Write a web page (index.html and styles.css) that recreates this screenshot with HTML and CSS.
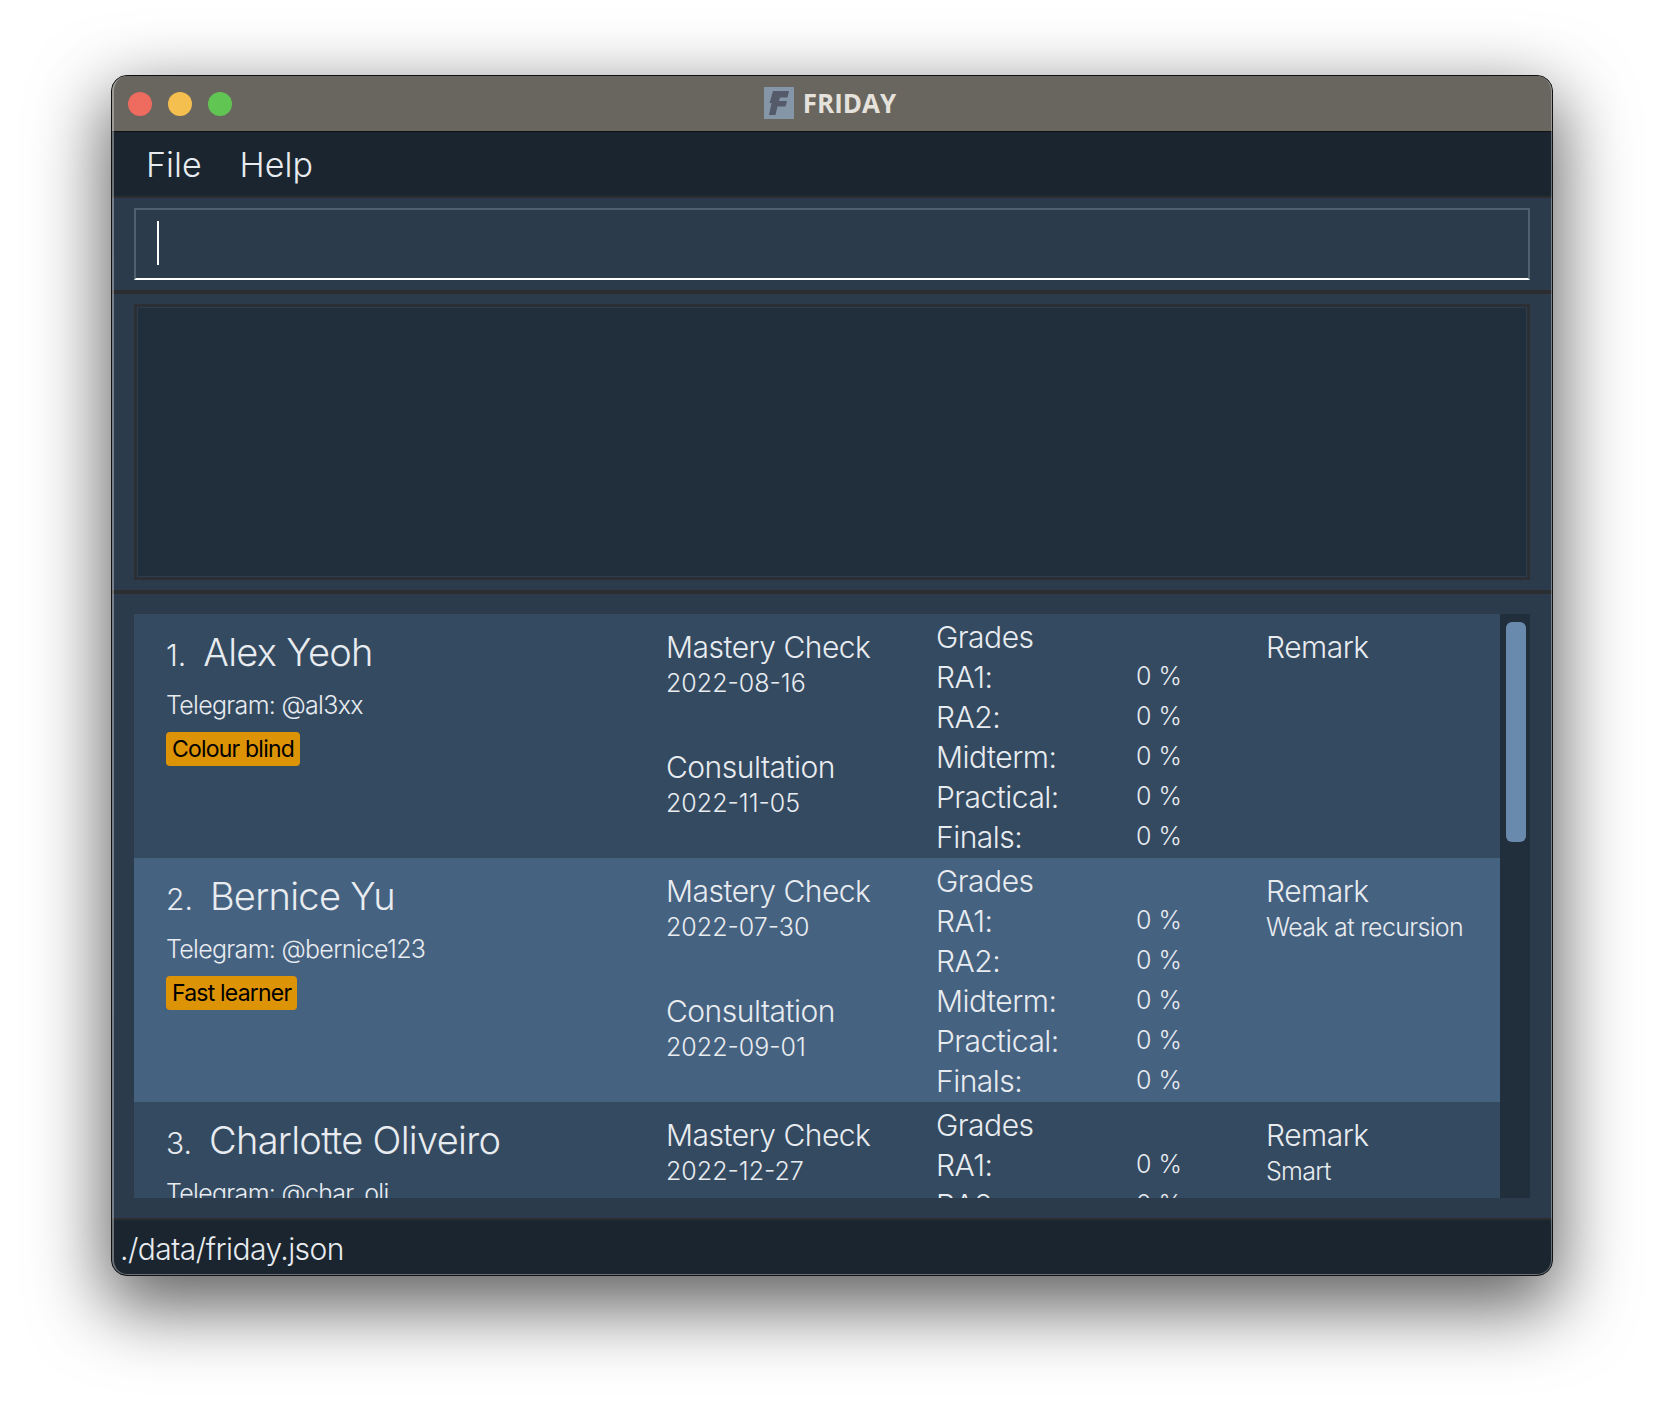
FILE: index.html
```html
<!DOCTYPE html>
<html lang="en">
<head>
    <meta charset="UTF-8">
    <title>FRIDAY</title>
    <link rel="stylesheet" href="styles.css">
</head>
<body>
    <div class="window">
        <div class="titlebar">
            <div class="lights">
                <span class="light red"></span>
                <span class="light yellow"></span>
                <span class="light green"></span>
            </div>
            <div class="title">
                <svg class="logo" viewBox="0 0 30 32" width="30" height="32">
                    <rect width="30" height="32" fill="#8496a8"/>
                    <path d="M9 4H25L23.500 10.500H16L15 14H23L21.500 19.500H13.500L11.500 28H5L7.500 16H5.500Z" fill="#555a6b"/>
                </svg>
                <span>FRIDAY</span>
            </div>
        </div>

        <div class="menubar">
            <span>File</span>
            <span>Help</span>
        </div>

        <div class="command-section">
            <div class="command-box"><span class="caret"></span></div>
        </div>

        <div class="result-section">
            <div class="result-box"></div>
        </div>

        <div class="list-section">
            <div class="list">
                <div class="cards">
                    <div class="card">
                        <div class="col-person">
                            <div class="name"><span class="index">1.</span>Alex Yeoh</div>
                            <div class="small telegram">Telegram: @al3xx</div>
                            <span class="tag">Colour blind</span>
                        </div>
                        <div class="col-dates">
                            <div class="date-block">
                                <div class="label">Mastery Check</div>
                                <div class="small">2022-08-16</div>
                            </div>
                            <div class="date-block">
                                <div class="label">Consultation</div>
                                <div class="small">2022-11-05</div>
                            </div>
                        </div>
                        <div class="col-grades">
                            <div class="label">Grades</div>
                            <div class="grade"><span class="label">RA1:</span><span class="pct">0 %</span></div>
                            <div class="grade"><span class="label">RA2:</span><span class="pct">0 %</span></div>
                            <div class="grade"><span class="label">Midterm:</span><span class="pct">0 %</span></div>
                            <div class="grade"><span class="label">Practical:</span><span class="pct">0 %</span></div>
                            <div class="grade"><span class="label">Finals:</span><span class="pct">0 %</span></div>
                        </div>
                        <div class="col-remark">
                            <div class="label">Remark</div>
                        </div>
                    </div>

                    <div class="card alt">
                        <div class="col-person">
                            <div class="name"><span class="index">2.</span>Bernice Yu</div>
                            <div class="small telegram">Telegram: @bernice123</div>
                            <span class="tag">Fast learner</span>
                        </div>
                        <div class="col-dates">
                            <div class="date-block">
                                <div class="label">Mastery Check</div>
                                <div class="small">2022-07-30</div>
                            </div>
                            <div class="date-block">
                                <div class="label">Consultation</div>
                                <div class="small">2022-09-01</div>
                            </div>
                        </div>
                        <div class="col-grades">
                            <div class="label">Grades</div>
                            <div class="grade"><span class="label">RA1:</span><span class="pct">0 %</span></div>
                            <div class="grade"><span class="label">RA2:</span><span class="pct">0 %</span></div>
                            <div class="grade"><span class="label">Midterm:</span><span class="pct">0 %</span></div>
                            <div class="grade"><span class="label">Practical:</span><span class="pct">0 %</span></div>
                            <div class="grade"><span class="label">Finals:</span><span class="pct">0 %</span></div>
                        </div>
                        <div class="col-remark">
                            <div class="label">Remark</div>
                            <div class="small remark-text">Weak at recursion</div>
                        </div>
                    </div>

                    <div class="card">
                        <div class="col-person">
                            <div class="name"><span class="index">3.</span>Charlotte Oliveiro</div>
                            <div class="small telegram">Telegram: @char_oli</div>
                        </div>
                        <div class="col-dates">
                            <div class="date-block">
                                <div class="label">Mastery Check</div>
                                <div class="small">2022-12-27</div>
                            </div>
                        </div>
                        <div class="col-grades">
                            <div class="label">Grades</div>
                            <div class="grade"><span class="label">RA1:</span><span class="pct">0 %</span></div>
                            <div class="grade"><span class="label">RA2:</span><span class="pct">0 %</span></div>
                        </div>
                        <div class="col-remark">
                            <div class="label">Remark</div>
                            <div class="small remark-text">Smart</div>
                        </div>
                    </div>
                </div>
                <div class="scrollbar"><div class="thumb"></div></div>
            </div>
        </div>

        <div class="statusbar">./data/friday.json</div>
    </div>
</body>
</html>
```

FILE: styles.css
```css
html {
    background-color: #ffffff;
}
body {
    margin: 0;
    min-height: 1424px;
    box-sizing: border-box;
    padding: 75px 0 0 111px;
    overflow: hidden;
    font-family: Inter, "Noto Sans", sans-serif;
    color: #e8ecf0;
}
.window {
    width: 1442px;
    height: 1201px;
    box-sizing: border-box;
    border: 1px solid #111;
    border-radius: 16px;
    overflow: hidden;
    position: relative;
    display: flex;
    flex-direction: column;
    background-color: #2c3b4c;
    box-shadow: 0 26px 72px 6px rgba(0, 0, 0, 0.62);
}
/* light rim just inside the window edge */
.window::after {
    content: "";
    position: absolute;
    inset: 0;
    border: solid rgba(255, 255, 255, 0.35);
    border-width: 0 1px 1px 2px;
    border-radius: 15px;
    pointer-events: none;
}
.titlebar {
    height: 56px;
    flex: none;
    box-sizing: border-box;
    border-bottom: 1px solid #111;
    padding-bottom: 2px;
    background-color: #69655f;
    display: flex;
    align-items: center;
    justify-content: center;
    position: relative;
}
.lights {
    position: absolute;
    left: 16px;
    top: 16px;
    display: flex;
    gap: 16px;
}
.light {
    width: 24px;
    height: 24px;
    border-radius: 50%;
}
.red { background-color: #ee6b60; }
.yellow { background-color: #f5bf4f; }
.green { background-color: #61c554; }
.title {
    display: flex;
    align-items: center;
    gap: 9px;
    margin-right: 4px;
    font-family: "Open Sans", sans-serif;
    font-weight: 700;
    font-size: 26px;
    color: #e5e2dc;
}
.logo {
    display: block;
}
.menubar {
    height: 64px;
    flex: none;
    box-sizing: border-box;
    background-color: #1b252f;
    display: flex;
    align-items: center;
    gap: 38px;
    padding-left: 34px;
    font-size: 34px;
    font-weight: 300;
}
.command-section {
    height: 94px;
    flex: none;
    box-sizing: border-box;
    border-top: 2px solid #2b2d30;
    padding: 10px 22px 0;
}
.command-box {
    height: 72px;
    box-sizing: border-box;
    border: 2px solid #51606f;
    border-bottom-color: #ffffff;
    padding: 11px 21px;
}
.caret {
    display: block;
    width: 2px;
    height: 44px;
    background-color: #ffffff;
}
.result-section {
    height: 300px;
    flex: none;
    box-sizing: border-box;
    border-top: 4px solid #2b2d30;
    padding: 10px 22px 0;
}
.result-box {
    height: 276px;
    box-sizing: border-box;
    border: 3px solid #2b2f33;
    background-color: #212e3c;
    box-shadow: inset 0 0 0 1px #2c3d50;
}
.list-section {
    height: 628px;
    flex: none;
    box-sizing: border-box;
    border-top: 4px solid #2b2d30;
    padding: 20px 22px 0;
}
.list {
    height: 584px;
    display: flex;
    overflow: hidden;
}
.cards {
    flex: 1;
    overflow: hidden;
}
.scrollbar {
    width: 30px;
    flex: none;
    box-sizing: border-box;
    padding: 8px 4px 0 6px;
    background-color: #212e3c;
}
.thumb {
    height: 220px;
    border-radius: 6px;
    background-color: #6a8aad;
}
.card {
    height: 244px;
    display: flex;
    background-color: #344a61;
    font-size: 30px;
    font-weight: 300;
}
.card.alt {
    background-color: #466281;
}
.col-person {
    width: 532px;
    flex: none;
    box-sizing: border-box;
    padding: 15px 0 0 32px;
}
.name {
    font-size: 38px;
    line-height: 46px;
    letter-spacing: -0.7px;
    display: flex;
    align-items: baseline;
}
.index {
    font-size: 30px;
    letter-spacing: 0;
    margin-right: 17px;
}
.small {
    font-size: 25px;
    line-height: 32px;
}
.telegram {
    margin-top: 11px;
    letter-spacing: -0.7px;
}
.remark-text {
    letter-spacing: -0.7px;
}
.tag {
    display: inline-block;
    margin-top: 11px;
    padding: 0 6px;
    height: 34px;
    line-height: 34px;
    border-radius: 4px;
    background-color: #dd9306;
    color: #000;
    font-size: 23px;
    font-weight: 400;
    letter-spacing: -0.8px;
}
.col-dates {
    width: 270px;
    flex: none;
    padding-top: 13px;
}
.date-block {
    height: 120px;
}
.label {
    line-height: 40px;
    letter-spacing: -0.5px;
}
.col-grades {
    width: 330px;
    flex: none;
    padding-top: 3px;
}
.grade {
    height: 40px;
    display: flex;
    align-items: center;
}
.grade .label {
    width: 200px;
}
.pct {
    font-size: 25px;
    margin-bottom: 3px;
}
.col-remark {
    padding-top: 13px;
}
.statusbar {
    flex: 1;
    box-sizing: border-box;
    border-top: 2px solid #2b2d30;
    background-color: #1b252f;
    padding: 2px 0 0 8px;
    font-size: 30px;
    font-weight: 300;
    letter-spacing: -0.55px;
    line-height: 54px;
}
```
